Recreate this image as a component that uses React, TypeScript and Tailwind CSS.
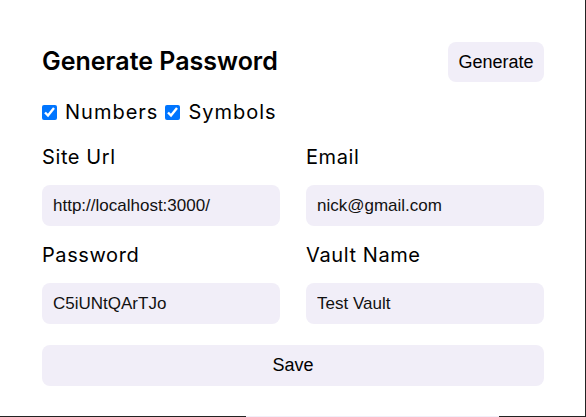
import { useState } from "react";

const label = "text-[20px] leading-[30px] tracking-[0.6px] text-black font-['Inter',sans-serif]";
const checkLabel = "text-[20px] leading-[30px] tracking-[1px] text-black font-['Inter',sans-serif] ml-[8px]";
const field =
  "h-[41px] w-full rounded-lg bg-[#f1eef8] px-[11px] text-[17px] text-[#111] font-['Liberation_Sans',Arial,sans-serif] outline-none";

export default function App() {
  const [numbers, setNumbers] = useState(true);
  const [symbols, setSymbols] = useState(true);

  return (
    <div className="min-h-screen bg-[#232323]">
      <div className="w-[585px] h-[416px] bg-white px-[42px] pt-[42px]">
        <div className="w-[502px]">
          <div className="flex items-center justify-between h-[40px]">
            <h1 className="text-[25px] font-semibold text-black font-['Inter',sans-serif]">
              Generate Password
            </h1>
            <button className="h-[40px] w-[96px] rounded-lg bg-[#f1eef8] text-[18px] text-black font-['Liberation_Sans',Arial,sans-serif]">
              Generate
            </button>
          </div>

          <div className="mt-[15px] flex items-center h-[30px]">
            <input
              type="checkbox"
              checked={numbers}
              onChange={(e) => setNumbers(e.target.checked)}
              className="w-[15px] h-[15px] accent-[#0075ff]"
            />
            <span className={checkLabel}>Numbers</span>
            <input
              type="checkbox"
              checked={symbols}
              onChange={(e) => setSymbols(e.target.checked)}
              className="ml-[7px] w-[15px] h-[15px] accent-[#0075ff]"
            />
            <span className={checkLabel}>Symbols</span>
          </div>

          <div className="mt-[15px] grid grid-cols-2 gap-x-[26px] gap-y-[14px]">
            <div>
              <div className={label}>Site Url</div>
              <input className={field + " mt-[13px]"} defaultValue="http://localhost:3000/" />
            </div>
            <div>
              <div className={label}>Email</div>
              <input className={field + " mt-[13px]"} defaultValue="nick@gmail.com" />
            </div>
            <div>
              <div className={label}>Password</div>
              <input className={field + " mt-[13px]"} defaultValue="C5iUNtQArTJo" />
            </div>
            <div>
              <div className={label}>Vault Name</div>
              <input className={field + " mt-[13px]"} defaultValue="Test Vault" />
            </div>
          </div>

          <button className="mt-[21px] h-[41px] w-full rounded-lg bg-[#f1eef8] text-[18px] text-black font-['Liberation_Sans',Arial,sans-serif]">
            Save
          </button>
        </div>
      </div>
      <div className="ml-[246px] w-[253px] h-px bg-[#f1eef8]" />
    </div>
  );
}
